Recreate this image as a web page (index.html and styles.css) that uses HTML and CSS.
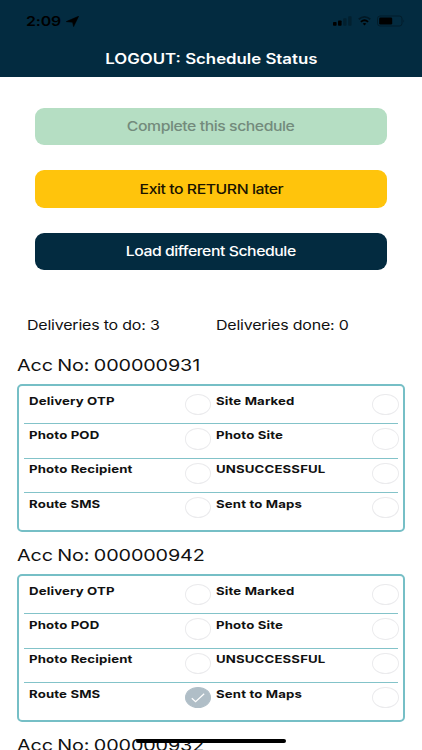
FILE: index.html
```html
<!DOCTYPE html>
<html lang="en">
<head>
  <meta charset="UTF-8" />
  <title>Schedule Status</title>
  <link rel="stylesheet" href="styles.css">
</head>
<body>
  <div class="screen">
    <header class="header">
      <div class="status-bar">
        <div class="status-left">
          <span class="time">2:09</span>
          <svg class="location" width="13" height="11" viewBox="0 0 13 11"><path d="M12.6 0.3 L7.6 10.6 L6.6 6.2 L0.3 5.6 Z" fill="#000" stroke="#000" stroke-width="0.6" stroke-linejoin="round"/></svg>
        </div>
        <svg class="status-icons" width="74" height="14" viewBox="0 0 74 14">
          <!-- signal -->
          <rect x="1" y="8" width="3.6" height="3.8" rx="0.8" fill="#000"/>
          <rect x="6" y="6.4" width="3.6" height="5.4" rx="0.8" fill="#000"/>
          <rect x="11.2" y="4.2" width="3.4" height="7.6" rx="0.8" fill="#02202f"/>
          <rect x="16.2" y="2.2" width="3.4" height="9.6" rx="0.8" fill="#02202f"/>
          <!-- wifi -->
          <path d="M26.8 5.3 Q32.5 0.4 38.2 5.3" fill="none" stroke="#021925" stroke-width="1.8"/>
          <path d="M28.9 7.9 Q32.5 4.7 36.1 7.9" fill="none" stroke="#000" stroke-width="1.8"/>
          <path d="M30.7 9.6 Q32.5 8.2 34.3 9.6 L32.5 11.6 Z" fill="#000"/>
          <!-- battery -->
          <rect x="45.5" y="2" width="24.5" height="10" rx="2.6" fill="none" stroke="#021d2b"/>
          <rect x="47.2" y="3.5" width="13" height="7" rx="1.2" fill="#000"/>
          <path d="M71.4 5.5 Q73 7 71.4 8.5 Z" fill="#021d2b"/>
        </svg>
      </div>
      <h1 class="title"><span class="wide">LOGOUT: Schedule Status</span></h1>
    </header>

    <div class="actions">
      <button class="btn btn-complete" disabled><span class="wide">Complete this schedule</span></button>
      <button class="btn btn-exit"><span class="wide">Exit to RETURN later</span></button>
      <button class="btn btn-load"><span class="wide">Load different Schedule</span></button>
    </div>

    <div class="totals">
      <div><span class="wide">Deliveries to do: 3</span></div>
      <div><span class="wide">Deliveries done: 0</span></div>
    </div>

    <main id="accounts"></main>

    <div class="home-indicator"></div>
  </div>

  <script>
    const rows = [
      ["Delivery OTP", "Site Marked"],
      ["Photo POD", "Photo Site"],
      ["Photo Recipient", "UNSUCCESSFUL"],
      ["Route SMS", "Sent to Maps"]
    ];

    const accounts = [
      { no: "000000931", rows: rows, done: [] },
      { no: "000000942", rows: rows, done: ["Route SMS"] },
      { no: "000000932", rows: [], done: [] }
    ];

    const tick = '<svg width="14" height="10" viewBox="0 0 14 10"><path d="M0.8 5.2 L4.6 8.8 L13.2 0.8" fill="none" stroke="#fff" stroke-width="1.2"/></svg>';

    function cell(label, done) {
      return `
        <div class="cell">
          <span class="wide label">${label}</span>
          <span class="check ${done ? "checked" : ""}">${done ? tick : ""}</span>
        </div>`;
    }

    document.getElementById("accounts").innerHTML = accounts.map(acc => `
      <section class="account">
        <h2 class="acc-no"><span class="wide">Acc No: ${acc.no}</span></h2>
        <div class="card">
          ${acc.rows.map(r => `<div class="row">${r.map(l => cell(l, acc.done.includes(l))).join("")}</div>`).join("")}
        </div>
      </section>`).join("");
  </script>
</body>
</html>
```
FILE: styles.css
```css
* {
  box-sizing: border-box;
}

body {
  margin: 0;
  font-family: Inter, "Liberation Sans", sans-serif;
  color: #111;
  background-color: #fff;
}

.screen {
  position: relative;
  width: 422px;
  height: 750px;
  overflow: hidden;
}

/* stretched lettering */
.wide {
  display: inline-block;
  white-space: nowrap;
  transform: scaleX(1.2);
  transform-origin: left center;
}

/* header */
.header {
  height: 77px;
  background-color: #032b40;
}

.status-bar {
  display: flex;
  justify-content: space-between;
  height: 48px;
  padding: 14px 16px 0 26px;
}

.status-left {
  display: flex;
  gap: 11px;
}

.time {
  font-size: 13px;
  line-height: 15px;
  font-weight: 600;
  letter-spacing: -0.1px;
  color: #000;
  transform: scaleX(1.22);
  transform-origin: left center;
}

.location {
  margin-top: 2px;
}

.title {
  margin: 0;
  font-size: 14px;
  line-height: 22px;
  font-weight: 600;
  text-align: center;
  color: #fff;
}

.title .wide,
.btn .wide {
  transform-origin: center;
}

/* buttons */
.actions {
  display: flex;
  flex-direction: column;
  gap: 25px;
  padding: 30.5px 35px 0;
}

.btn {
  height: 37.5px;
  padding: 0;
  border: none;
  border-radius: 9px;
  font-family: inherit;
  font-size: 13.5px;
  font-weight: 500;
  letter-spacing: -0.38px;
}

.btn .wide {
  transform: scaleX(1.17);
}

.btn-complete {
  color: #738b7c;
  background-color: #b5dec3;
}

.btn-exit {
  color: #1a1400;
  background-color: #ffc40c;
}

.btn-load {
  color: #fff;
  background-color: #032b40;
}

/* totals */
.totals {
  display: grid;
  grid-template-columns: 189px 1fr;
  margin-top: 45px;
  padding-left: 27px;
  font-size: 13.3px;
  line-height: 20px;
  letter-spacing: -0.16px;
}

/* accounts */
.account {
  height: 190px;
  padding: 19px 17px 0;
}

.acc-no {
  margin: 0 0 8px;
  font-size: 16.5px;
  line-height: 22px;
  font-weight: 400;
  letter-spacing: -0.12px;
  word-spacing: -0.8px;
}

.card {
  height: 148px;
  padding: 4px 5px 0;
  border: 2px solid #76bfc6;
  border-radius: 5px;
}

.row {
  display: grid;
  grid-template-columns: 187.3px 187.3px;
  height: 34.4px;
  border-bottom: 1px solid #83c3c9;
}

.row:last-child {
  border-bottom: none;
}

.cell {
  display: flex;
  justify-content: space-between;
  padding-left: 5px;
}

.label {
  margin-top: 3.6px;
  font-size: 11px;
  line-height: 14px;
  font-weight: 700;
  letter-spacing: 0.12px;
}

.check {
  display: flex;
  align-items: center;
  justify-content: center;
  width: 26.5px;
  height: 21.5px;
  margin-top: 3.8px;
  border: 1px solid #ebebed;
  border-radius: 50%;
}

.checked {
  border-color: #b0bec7;
  background-color: #b0bec7;
}

.home-indicator {
  position: absolute;
  left: 136px;
  top: 739px;
  width: 150px;
  height: 4px;
  border-radius: 2px;
  background-color: #000;
}
```
